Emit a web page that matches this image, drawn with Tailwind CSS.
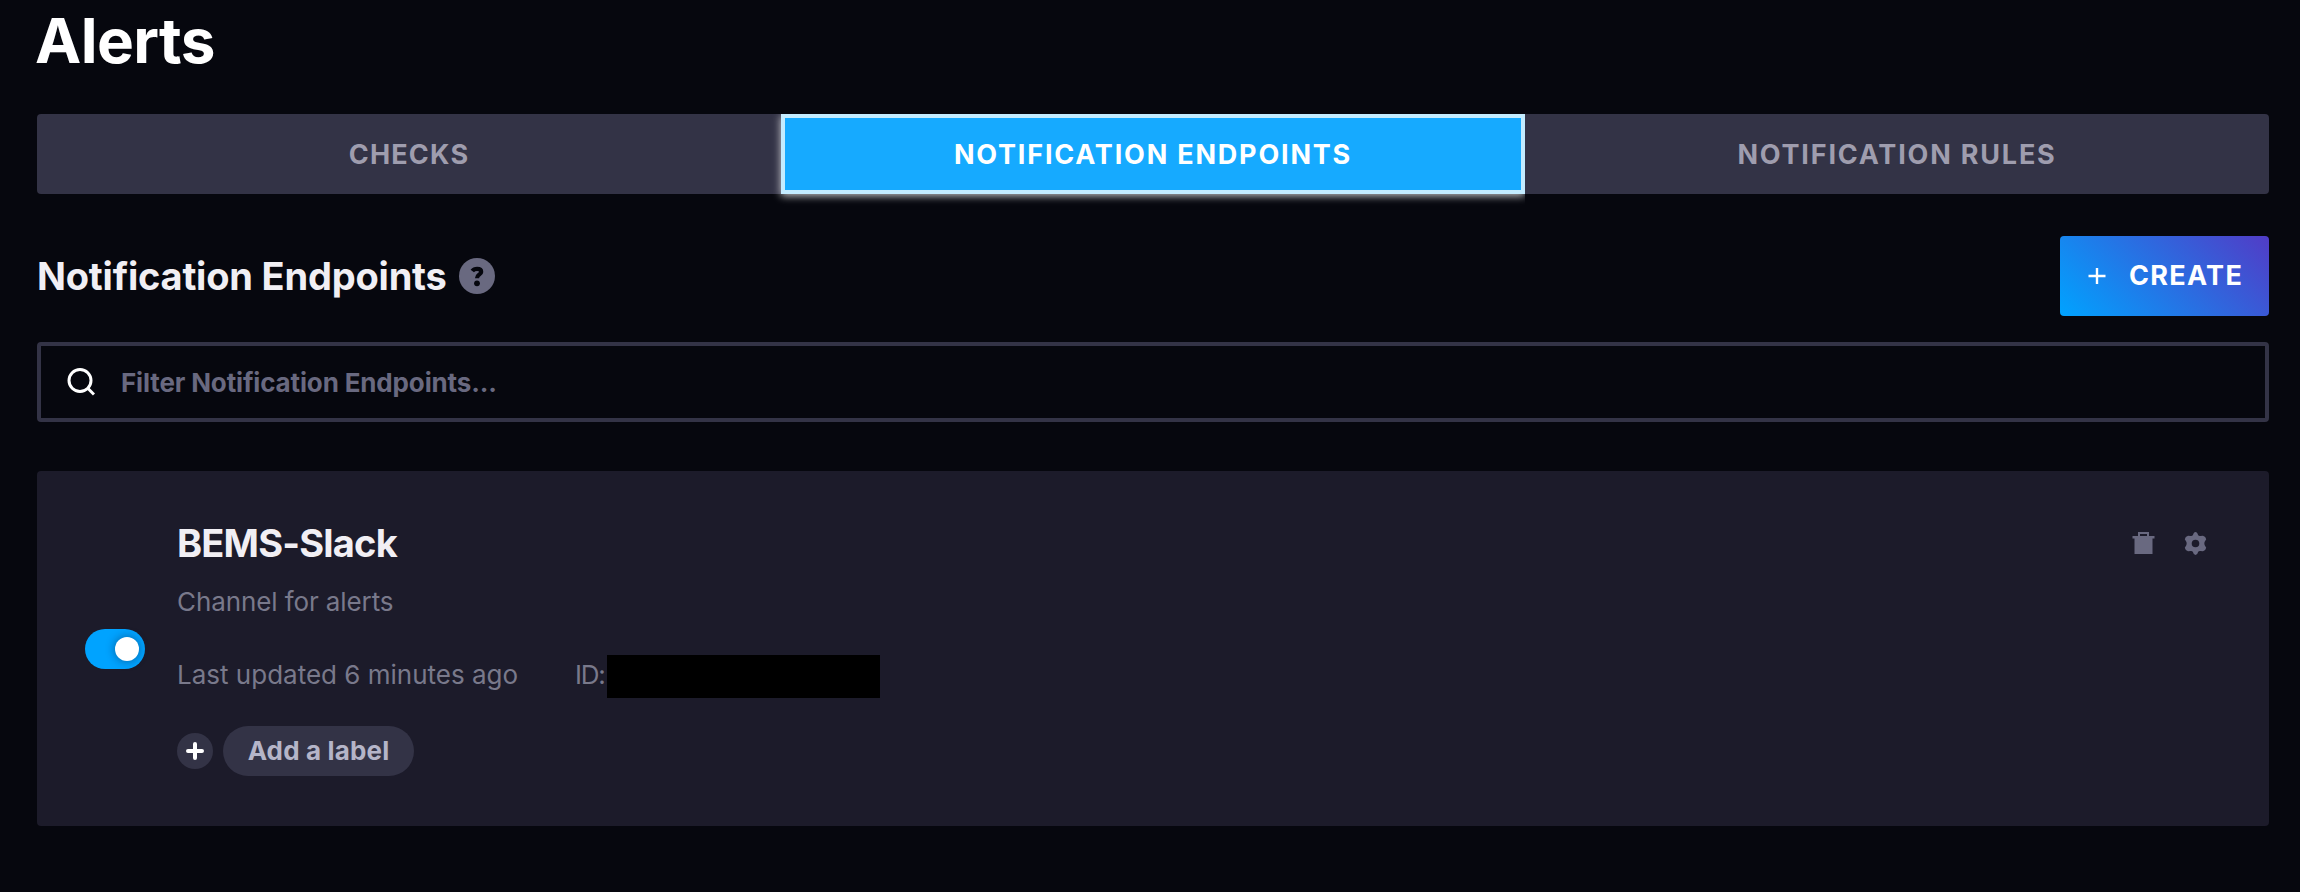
<!DOCTYPE html>
<html lang="en">
<head>
<meta charset="utf-8">
<title>Alerts</title>
<script src="https://cdn.jsdelivr.net/npm/@tailwindcss/browser@4"></script>
</head>
<body class="h-[892px] overflow-hidden bg-[#06070e] pl-[37px] pr-[31px] font-['Inter',sans-serif] whitespace-nowrap">
  <h1 class="-ml-0.5 h-[114px] pt-[11px] text-[62px] leading-[60px] font-bold tracking-[-0.6px] text-white">Alerts</h1>

  <nav class="grid h-20 grid-cols-3 rounded bg-[#333346] text-[27px] font-bold text-[#9f9dae]">
    <a class="flex items-center justify-center pt-0.5 tracking-[1.2px]">CHECKS</a>
    <a class="flex items-center justify-center border-4 border-[#c4ecff] bg-[#16aaff] pt-0.5 tracking-[1.8px] text-white shadow-[0_2px_8px_0_rgba(255,255,255,0.75)] [clip-path:inset(0_0_-16px_-16px)]">NOTIFICATION ENDPOINTS</a>
    <a class="flex items-center justify-center pt-0.5 tracking-[1.8px]">NOTIFICATION RULES</a>
  </nav>

  <div class="mt-[42px] flex h-20 items-center justify-between">
    <div class="flex items-center gap-3">
      <h2 class="text-[38px] leading-[44px] font-bold tracking-[-0.2px] text-[#f1eff4]">Notification Endpoints</h2>
      <svg class="size-9" viewBox="0 0 36 36">
        <circle cx="18" cy="18" r="18" fill="#696980"/>
        <path d="M13.300 13C14.500 11.400 16.300 10.900 18.100 10.900C20.800 10.900 22.200 12.100 22.200 13.900C22.200 16.400 18 16.600 18 20.200" fill="none" stroke="#05060d" stroke-width="4.200"/>
        <circle cx="18" cy="25.300" r="2.900" fill="#05060d"/>
      </svg>
    </div>
    <button class="flex h-20 w-[209px] items-center rounded bg-[linear-gradient(45deg,#00a3ff,#513cc6)] pl-[28px] text-[27px] font-bold tracking-[1.3px] text-white">
      <svg class="mr-[23px] size-[18px]" viewBox="0 0 18 18"><path d="M9 1v16M.5 9h17" stroke="#fff" stroke-width="2.400"/></svg>
      CREATE
    </button>
  </div>

  <div class="mt-[26px] flex h-20 items-center rounded border-4 border-[#333346] pl-[26px]">
    <svg class="size-[28px]" viewBox="0 0 28 28" fill="none" stroke="#fff" stroke-width="3"><circle cx="13" cy="12.500" r="11"/><path d="M20.800 20.300L27 26.500"/></svg>
    <span class="ml-[26px] text-[26px] font-bold tracking-[-0.15px] text-[#696980]">Filter Notification Endpoints...</span>
  </div>

  <section class="mt-[49px] flex h-[355px] rounded bg-[#1c1b2a] pl-12">
    <div class="mt-[158px] flex h-10 w-[60px] items-center justify-end rounded-full bg-[#00a3ff] pr-1.5">
      <div class="size-6 rounded-full bg-white shadow-[0_0_8px_1px_rgba(15,30,60,0.4)]"></div>
    </div>
    <div class="ml-8 flex-1 pt-[50px] text-[26px] leading-8 font-normal text-[#79798b]">
      <h3 class="text-[38px] leading-[44px] font-bold tracking-[-0.8px] text-[#f1eff4]">BEMS-Slack</h3>
      <p class="mt-[21px] tracking-[-0.1px]">Channel for alerts</p>
      <div class="mt-[37px] flex h-[43px] items-center">
        <span class="-mt-1 w-[398px]">Last updated 6 minutes ago</span>
        <span class="-mt-1 w-8 tracking-[-1.2px]">ID:</span>
        <span class="h-full w-[273px] bg-black"></span>
      </div>
      <div class="mt-7 flex items-center gap-[10px]">
        <svg class="size-9" viewBox="0 0 36 36"><circle cx="18" cy="18" r="18" fill="#333346"/><path d="M18 11v14M11 18h14" stroke="#fff" stroke-width="4" stroke-linecap="round"/></svg>
        <span class="flex h-[50px] w-[191px] items-center justify-center rounded-full bg-[#333346] font-bold tracking-[0.15px] text-[#b5b5c8]">Add a label</span>
      </div>
    </div>
    <div class="mr-[62px] flex gap-[29px] pt-[61px]">
      <svg class="size-[23px]" viewBox="0 0 23 23" fill="#696980"><path fill-rule="evenodd" d="M6 4V0h11V4h5.500v2.500H20.500V22H2.500V6.500H.5V4zM8 2V4h7V2z"/></svg>
      <svg class="size-[23px]" viewBox="0 0 23 23"><path fill="#696980" fill-rule="evenodd" d="M9.800 .9Q11.500-.7 13.200 .9L14.200 3.200Q15 4.200 16.200 4L19 3.700Q21.800 4.600 22.200 7.200L20.700 9.800Q20 11.500 20.700 13.200L22.200 15.800Q21.800 18.400 19 19.300L16.200 19Q15 18.800 14.200 19.800L13.200 22.100Q11.500 23.700 9.800 22.100L8.800 19.800Q8 18.800 6.800 19L4 19.300Q1.200 18.400 .8 15.800L2.300 13.200Q3 11.500 2.300 9.800L.8 7.200Q1.200 4.600 4 3.700L6.800 4Q8 4.200 8.800 3.200zM11.500 7.700A3.800 3.800 0 1 0 11.500 15.300A3.800 3.800 0 1 0 11.500 7.700z"/></svg>
    </div>
  </section>
</body>
</html>
